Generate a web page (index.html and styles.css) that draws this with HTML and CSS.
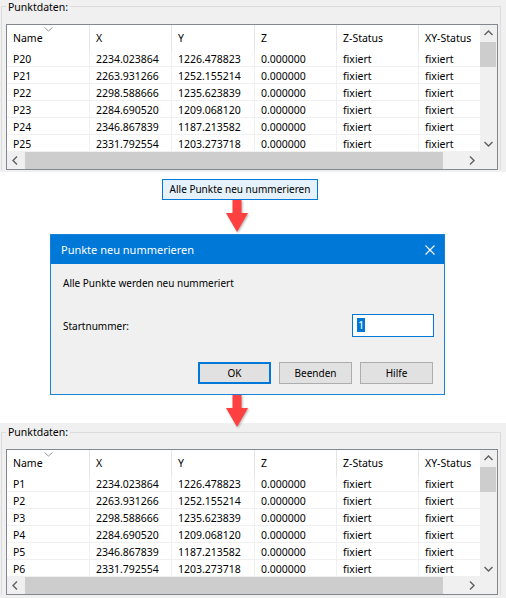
FILE: index.html
```html
<!DOCTYPE html>
<html lang="de">
<head>
<meta charset="utf-8">
<title>Punkte neu nummerieren</title>
<link rel="stylesheet" href="styles.css">
</head>
<body>
<div class="panel panel-first">
  <fieldset class="group">
    <legend>Punktdaten:</legend>
    <div class="list">
      <div class="list-body">
        <div class="grid">
          <div class="hdr">
            <div class="hc sorted">Name<svg class="sort" width="9" height="5" viewBox="0 0 9 5"><polyline points="0.5,0.5 4.5,4 8.5,0.5" fill="none" stroke="#9a9a9a" stroke-width="1"/></svg></div>
            <div class="hc">X</div>
            <div class="hc">Y</div>
            <div class="hc">Z</div>
            <div class="hc">Z-Status</div>
            <div class="hc">XY-Status</div>
          </div>
          <div class="row"><div class="c">P20</div><div class="c">2234.023864</div><div class="c">1226.478823</div><div class="c">0.000000</div><div class="c">fixiert</div><div class="c">fixiert</div></div>
          <div class="row"><div class="c">P21</div><div class="c">2263.931266</div><div class="c">1252.155214</div><div class="c">0.000000</div><div class="c">fixiert</div><div class="c">fixiert</div></div>
          <div class="row"><div class="c">P22</div><div class="c">2298.588666</div><div class="c">1235.623839</div><div class="c">0.000000</div><div class="c">fixiert</div><div class="c">fixiert</div></div>
          <div class="row"><div class="c">P23</div><div class="c">2284.690520</div><div class="c">1209.068120</div><div class="c">0.000000</div><div class="c">fixiert</div><div class="c">fixiert</div></div>
          <div class="row"><div class="c">P24</div><div class="c">2346.867839</div><div class="c">1187.213582</div><div class="c">0.000000</div><div class="c">fixiert</div><div class="c">fixiert</div></div>
          <div class="row"><div class="c">P25</div><div class="c">2331.792554</div><div class="c">1203.273718</div><div class="c">0.000000</div><div class="c">fixiert</div><div class="c">fixiert</div></div>
        </div>
        <div class="vscroll">
          <div class="sbtn"><svg width="17" height="17" viewBox="0 0 17 17"><polyline points="4.5,10 8.5,6 12.5,10" fill="none" stroke="#606060" stroke-width="1.4"/></svg></div>
          <div class="vthumb"></div>
          <div class="vtrack"></div>
          <div class="sbtn"><svg width="17" height="17" viewBox="0 0 17 17"><polyline points="4.5,7 8.5,11 12.5,7" fill="none" stroke="#606060" stroke-width="1.4"/></svg></div>
        </div>
      </div>
      <div class="hbar">
        <div class="hscroll">
          <div class="sbtn"><svg width="17" height="17" viewBox="0 0 17 17"><polyline points="10,4.5 6,8.5 10,12.5" fill="none" stroke="#606060" stroke-width="1.4"/></svg></div>
          <div class="htrack"><div class="hthumb"></div></div>
          <div class="sbtn"><svg width="17" height="17" viewBox="0 0 17 17"><polyline points="7,4.5 11,8.5 7,12.5" fill="none" stroke="#606060" stroke-width="1.4"/></svg></div>
        </div>
        <div class="corner"></div>
      </div>
    </div>
  </fieldset>
</div>

<div class="action-row">
  <div class="btn-renumber">Alle Punkte neu nummerieren</div>
</div>

<div class="arrow">
  <svg class="arrow-svg" width="26" height="34" viewBox="0 0 26 34"><g class="arrow-shape"><rect x="7.5" y="0" width="9" height="14" fill="#ff4040"/><polygon points="1,13 23,13 12,32" fill="#ff4040"/></g></svg>
</div>

<div class="dialog">
  <div class="titlebar">
    <span class="title">Punkte neu nummerieren</span>
    <svg class="close" width="10" height="10" viewBox="0 0 10 10"><path d="M0.5 0.5 L9.5 9.5 M9.5 0.5 L0.5 9.5" stroke="#fff" stroke-width="1.1"/></svg>
  </div>
  <div class="dbody">
    <div class="msg">Alle Punkte werden neu nummeriert</div>
    <div class="field">
      <span class="label">Startnummer:</span>
      <div class="input"><span class="sel">1</span></div>
    </div>
    <div class="buttons">
      <div class="btn btn-default">OK</div>
      <div class="btn">Beenden</div>
      <div class="btn">Hilfe</div>
    </div>
  </div>
</div>

<div class="arrow arrow-2">
  <svg class="arrow-svg" width="26" height="34" viewBox="0 0 26 34"><g class="arrow-shape"><rect x="7.5" y="0" width="9" height="14" fill="#ff4040"/><polygon points="1,13 23,13 12,32" fill="#ff4040"/></g></svg>
</div>

<div class="panel">
  <fieldset class="group">
    <legend>Punktdaten:</legend>
    <div class="list">
      <div class="list-body">
        <div class="grid">
          <div class="hdr">
            <div class="hc sorted">Name<svg class="sort" width="9" height="5" viewBox="0 0 9 5"><polyline points="0.5,0.5 4.5,4 8.5,0.5" fill="none" stroke="#9a9a9a" stroke-width="1"/></svg></div>
            <div class="hc">X</div>
            <div class="hc">Y</div>
            <div class="hc">Z</div>
            <div class="hc">Z-Status</div>
            <div class="hc">XY-Status</div>
          </div>
          <div class="row"><div class="c">P1</div><div class="c">2234.023864</div><div class="c">1226.478823</div><div class="c">0.000000</div><div class="c">fixiert</div><div class="c">fixiert</div></div>
          <div class="row"><div class="c">P2</div><div class="c">2263.931266</div><div class="c">1252.155214</div><div class="c">0.000000</div><div class="c">fixiert</div><div class="c">fixiert</div></div>
          <div class="row"><div class="c">P3</div><div class="c">2298.588666</div><div class="c">1235.623839</div><div class="c">0.000000</div><div class="c">fixiert</div><div class="c">fixiert</div></div>
          <div class="row"><div class="c">P4</div><div class="c">2284.690520</div><div class="c">1209.068120</div><div class="c">0.000000</div><div class="c">fixiert</div><div class="c">fixiert</div></div>
          <div class="row"><div class="c">P5</div><div class="c">2346.867839</div><div class="c">1187.213582</div><div class="c">0.000000</div><div class="c">fixiert</div><div class="c">fixiert</div></div>
          <div class="row"><div class="c">P6</div><div class="c">2331.792554</div><div class="c">1203.273718</div><div class="c">0.000000</div><div class="c">fixiert</div><div class="c">fixiert</div></div>
        </div>
        <div class="vscroll">
          <div class="sbtn"><svg width="17" height="17" viewBox="0 0 17 17"><polyline points="4.5,10 8.5,6 12.5,10" fill="none" stroke="#606060" stroke-width="1.4"/></svg></div>
          <div class="vthumb"></div>
          <div class="vtrack"></div>
          <div class="sbtn"><svg width="17" height="17" viewBox="0 0 17 17"><polyline points="4.5,7 8.5,11 12.5,7" fill="none" stroke="#606060" stroke-width="1.4"/></svg></div>
        </div>
      </div>
      <div class="hbar">
        <div class="hscroll">
          <div class="sbtn"><svg width="17" height="17" viewBox="0 0 17 17"><polyline points="10,4.5 6,8.5 10,12.5" fill="none" stroke="#606060" stroke-width="1.4"/></svg></div>
          <div class="htrack"><div class="hthumb"></div></div>
          <div class="sbtn"><svg width="17" height="17" viewBox="0 0 17 17"><polyline points="7,4.5 11,8.5 7,12.5" fill="none" stroke="#606060" stroke-width="1.4"/></svg></div>
        </div>
        <div class="corner"></div>
      </div>
    </div>
  </fieldset>
</div>
</body>
</html>
```

FILE: styles.css
```css
* { box-sizing: border-box; }
html, body { margin: 0; padding: 0; background: #ffffff; }
body {
  width: 506px;
  height: 598px;
  overflow: hidden;
  font-family: "Noto Sans", "Open Sans", sans-serif;
  color: #000;
}

/* ---------- Punktdaten panel ---------- */
.panel {
  background: #f0f0f0;
  height: 175px;
  padding: 1px 5px 0 1px;
  overflow: hidden;
}
.panel-first {
  height: 172px;
  padding-top: 0;
}

.group {
  margin: 0;
  min-width: 0;
  border: 1px solid #dcdcdc;
  border-bottom: none;
  padding: 9px 2px 0 4px;
}
.group legend {
  padding: 0 2px;
  margin: 0;
  font-size: 10.5px;
  line-height: 16px;
  color: #000;
}
.panel-first .group { padding-top: 11px; }
.panel-first .group legend { line-height: 12px; padding-top: 1px; }

.list {
  width: 492px;
  height: 146px;
  border: 1px solid #828790;
  background: #fff;
  display: flex;
  flex-direction: column;
}
.list-body {
  display: flex;
  height: 127px;
}
.grid {
  width: 473px;
  overflow: hidden;
  font-size: 10.5px;
}
.hdr, .row {
  display: grid;
  grid-template-columns: 83px 82px 83px 82px 82px 82px;
  width: 494px;
}
.hdr { height: 25px; }
.hc {
  position: relative;
  border-right: 1px solid #e5e5e5;
  padding-left: 6px;
  line-height: 26px;
  white-space: nowrap;
}
.sort {
  position: absolute;
  left: 37px;
  top: 2px;
}
.row {
  height: 17px;
  border-bottom: 1px solid #f0f0f0;
}
.c {
  border-right: 1px solid #f0f0f0;
  padding-left: 6px;
  line-height: 18px;
  white-space: nowrap;
}

.vscroll {
  width: 17px;
  height: 127px;
  background: #f0f0f0;
  display: flex;
  flex-direction: column;
}
.sbtn { width: 17px; height: 17px; flex: none; }
.sbtn svg { display: block; }
.vthumb {
  height: 25px;
  margin: 0 1px 0 0;
  background: #cdcdcd;
  flex: none;
}
.vtrack { flex: 1; }

.hbar { display: flex; height: 17px; }
.hscroll {
  width: 473px;
  display: flex;
  background: #f0f0f0;
}
.htrack { flex: 1; padding-left: 1px; }
.hthumb { width: 418px; height: 17px; background: #cdcdcd; }
.corner { width: 17px; background: #f0f0f0; }

/* ---------- action button ---------- */
.action-row {
  padding: 7px 0 0 162px;
}
.btn-renumber {
  width: 156px;
  height: 21px;
  border: 1px solid #0078d7;
  background: #e5f1fb;
  font-size: 10px;
  line-height: 19px;
  text-align: center;
  white-space: nowrap;
}

/* ---------- red arrows ---------- */
.arrow {
  height: 34px;
  padding-left: 225px;
}
.arrow-2 { height: 28px; }
.arrow-svg {
  display: block;
  position: relative;
  z-index: 1;
  overflow: visible;
}
.arrow-shape { filter: drop-shadow(1px 1px 1px rgba(0, 0, 0, 0.3)); }

/* ---------- dialog ---------- */
.dialog {
  margin-left: 50px;
  width: 395px;
  height: 161px;
  border: 1px solid #1883d7;
  background: #f0f0f0;
  display: flex;
  flex-direction: column;
}
.titlebar {
  height: 29px;
  background: #0078d7;
  display: flex;
  align-items: center;
  justify-content: space-between;
  padding: 0 9px 0 10px;
  flex: none;
}
.title {
  color: #fff;
  font-size: 11px;
  line-height: 16px;
  white-space: nowrap;
}
.close { display: block; }

.dbody {
  flex: 1;
  padding: 11px 11px 0 12px;
  font-size: 10px;
}
.msg { line-height: 16px; white-space: nowrap; }
.field {
  margin-top: 23px;
  height: 23px;
  display: flex;
  align-items: center;
  justify-content: space-between;
}
.label { line-height: 16px; }
.input {
  width: 82px;
  height: 23px;
  margin-right: -1px;
  border: 1px solid #0078d7;
  background: #fff;
  padding: 3px 0 0 4px;
  font-size: 11px;
}
.sel {
  display: inline-block;
  background: #0078d7;
  color: #fff;
  line-height: 14px;
  height: 14px;
  padding: 0 1px;
  vertical-align: top;
}
.buttons {
  margin-top: 25px;
  display: flex;
  justify-content: flex-end;
  gap: 8px;
}
.btn {
  width: 73px;
  height: 22px;
  border: 1px solid #adadad;
  background: #e1e1e1;
  text-align: center;
  line-height: 20px;
  white-space: nowrap;
}
.btn-default {
  border: 2px solid #0078d7;
  line-height: 18px;
}
```
